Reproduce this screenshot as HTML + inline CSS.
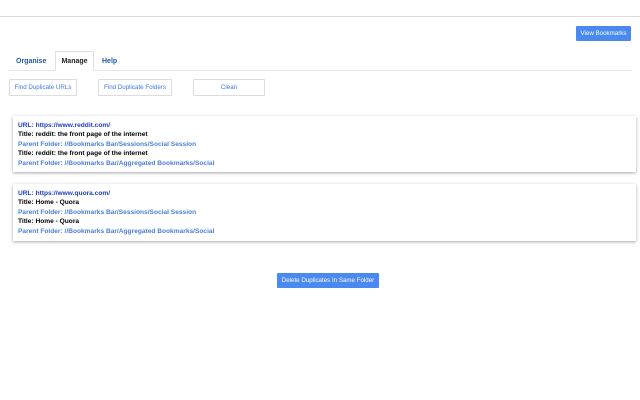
<!DOCTYPE html>
<html><head><style>
body{margin:0;width:640px;height:400px;background:#fff;font-family:"Liberation Sans",sans-serif;position:relative;overflow:hidden}
.a{position:absolute}
.btn,.pb{position:absolute;display:flex;align-items:center;justify-content:center;box-sizing:border-box;border-radius:1px;font-size:6.2px;white-space:nowrap}
.btn{border:1px solid #ddd;background:#fff;color:#3b78e7}
.pb{background:#4a89f0;color:#fff}
.card{position:absolute;left:13px;width:623px;background:#fff;box-shadow:0 1px 3px rgba(0,0,0,.35);box-sizing:border-box;padding:5px 0 0 5px;font-size:6.6px;font-weight:bold;line-height:9.4px}
.u{color:#1a3fc4}.t{color:#000}.p{color:#4a7fd8}
.tab{position:absolute;top:51px;height:20px;display:flex;align-items:center;font-size:7px;font-weight:bold}
</style></head><body>
<div class="a" style="left:0;top:16px;width:640px;height:1px;background:#ddd"></div>
<div class="pb" style="left:576px;top:26px;width:55px;height:15px">View Bookmarks</div>
<div class="a" style="left:8px;top:70px;width:624px;height:1px;background:#e6e6e6"></div>
<div class="tab" style="left:16px;color:#2458a8">Organise</div>
<div class="tab" style="left:55px;width:39px;border:1px solid #e0e0e0;border-bottom:1px solid #fff;background:#fff;box-sizing:border-box;color:#222;justify-content:center">Manage</div>
<div class="tab" style="left:102px;color:#2458a8">Help</div>
<div class="btn" style="left:9px;top:79px;width:68px;height:17px">Find Duplicate URLs</div>
<div class="btn" style="left:98px;top:79px;width:74px;height:17px">Find Duplicate Folders</div>
<div class="btn" style="left:193px;top:79px;width:72px;height:17px">Clean</div>
<div class="card" style="top:116px;height:56px">
<div class="u">URL: https://www.reddit.com/</div>
<div class="t">Title: reddit: the front page of the internet</div>
<div class="p">Parent Folder: //Bookmarks Bar/Sessions/Social Session</div>
<div class="t">Title: reddit: the front page of the internet</div>
<div class="p">Parent Folder: //Bookmarks Bar/Aggregated Bookmarks/Social</div>
</div>
<div class="card" style="top:184px;height:57px">
<div class="u">URL: https://www.quora.com/</div>
<div class="t">Title: Home - Quora</div>
<div class="p">Parent Folder: //Bookmarks Bar/Sessions/Social Session</div>
<div class="t">Title: Home - Quora</div>
<div class="p">Parent Folder: //Bookmarks Bar/Aggregated Bookmarks/Social</div>
</div>
<div class="pb" style="left:277px;top:273px;width:102px;height:15px">Delete Duplicates In Same Folder</div>
</body></html>
